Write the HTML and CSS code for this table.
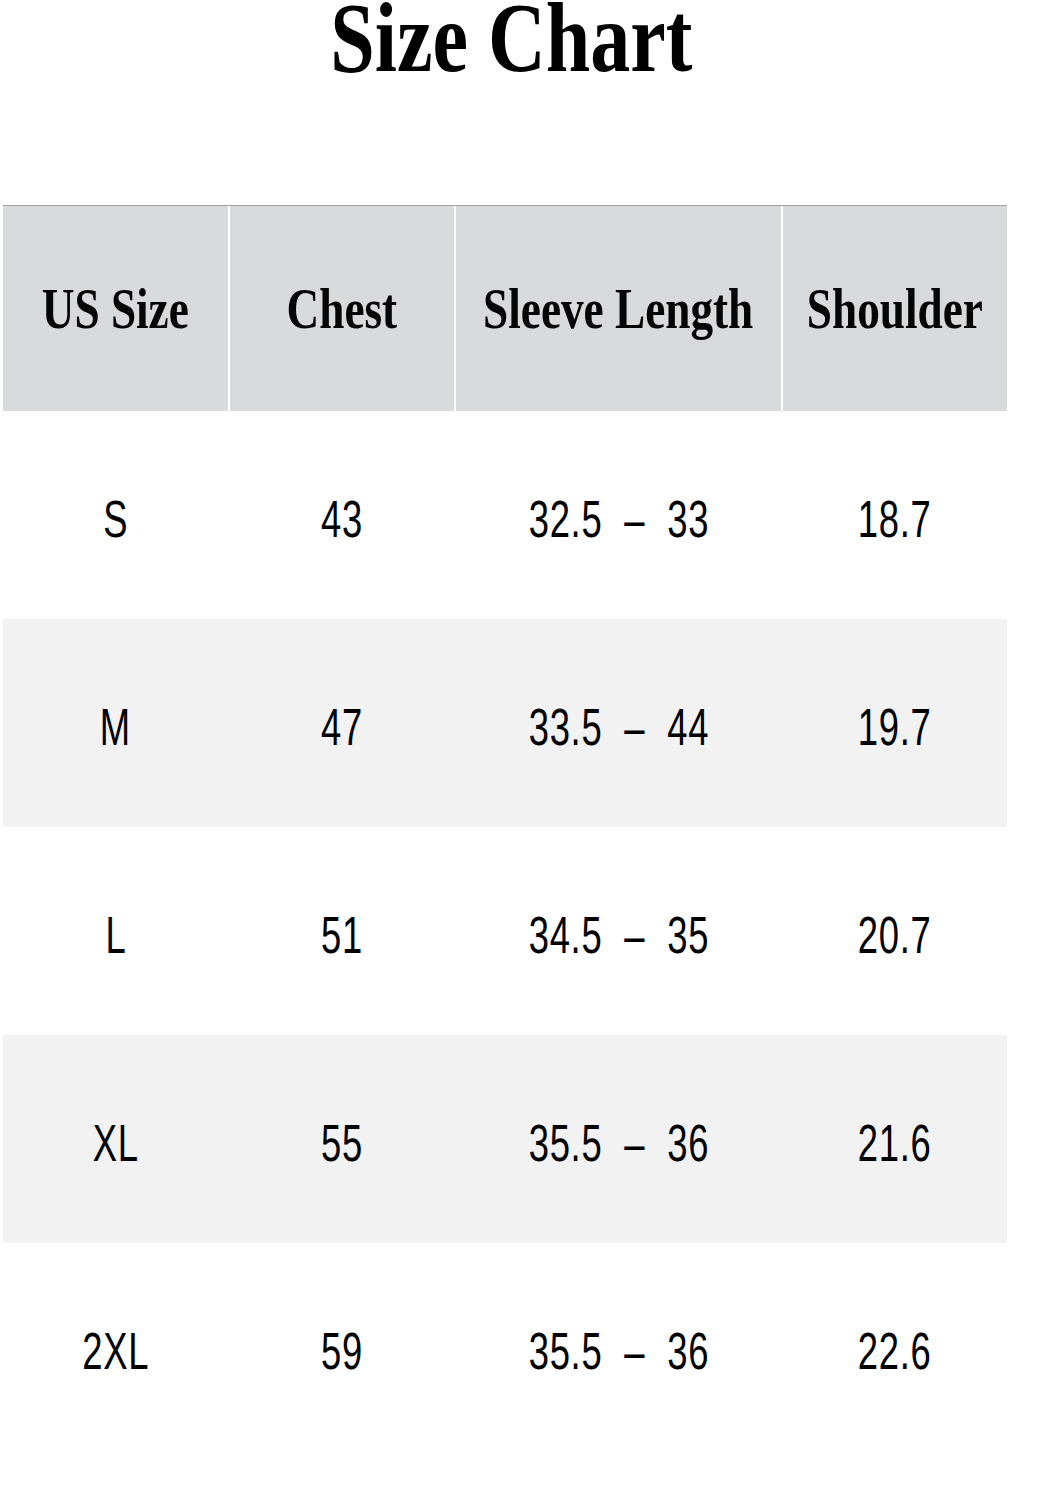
FILE: index.html
```html
<!DOCTYPE html>
<html lang="en">
<head>
<meta charset="utf-8">
<title>Size Chart</title>
<link rel="stylesheet" href="styles.css">
</head>
<body>
<div class="page">
  <h1 class="title"><span class="squeeze">Size Chart</span></h1>
  <div class="chart">
    <div class="row head">
      <div class="cell"><span class="hsq">US Size</span></div>
      <div class="cell"><span class="hsq">Chest</span></div>
      <div class="cell"><span class="hsq">Sleeve Length</span></div>
      <div class="cell"><span class="hsq">Shoulder</span></div>
    </div>
    <div class="row">
      <div class="cell"><span class="dsq">S</span></div>
      <div class="cell"><span class="dsq">43</span></div>
      <div class="cell"><span class="dsq">32.5 – 33</span></div>
      <div class="cell"><span class="dsq">18.7</span></div>
    </div>
    <div class="row alt">
      <div class="cell"><span class="dsq">M</span></div>
      <div class="cell"><span class="dsq">47</span></div>
      <div class="cell"><span class="dsq">33.5 – 44</span></div>
      <div class="cell"><span class="dsq">19.7</span></div>
    </div>
    <div class="row">
      <div class="cell"><span class="dsq">L</span></div>
      <div class="cell"><span class="dsq">51</span></div>
      <div class="cell"><span class="dsq">34.5 – 35</span></div>
      <div class="cell"><span class="dsq">20.7</span></div>
    </div>
    <div class="row alt">
      <div class="cell"><span class="dsq">XL</span></div>
      <div class="cell"><span class="dsq">55</span></div>
      <div class="cell"><span class="dsq">35.5 – 36</span></div>
      <div class="cell"><span class="dsq">21.6</span></div>
    </div>
    <div class="row">
      <div class="cell"><span class="dsq">2XL</span></div>
      <div class="cell"><span class="dsq">59</span></div>
      <div class="cell"><span class="dsq">35.5 – 36</span></div>
      <div class="cell"><span class="dsq">22.6</span></div>
    </div>
  </div>
</div>
</body>
</html>
```
FILE: styles.css
```css
html, body {
  margin: 0;
  padding: 0;
  background: #ffffff;
}

.page {
  width: 1047px;
  height: 1500px;
  overflow: hidden;
  background: #ffffff;
  color: #000000;
}

.title {
  margin: 0;
  padding-right: 24px;
  height: 76px;
  line-height: 76px;
  text-align: center;
  font-family: "Liberation Serif", "Times New Roman", serif;
  font-weight: bold;
  font-size: 100px;
}

.squeeze {
  display: inline-block;
  transform: scaleX(0.8);
  transform-origin: center;
}

.chart {
  margin: 129px 0 0 3px;
  width: 1004px;
}

.row {
  display: grid;
  grid-template-columns: 225px 224px 325px 224px;
  column-gap: 2px;
  height: 208px;
}

.row.alt {
  background: #f2f2f2;
}

.row.head {
  height: 206px;
  border-top: 1px solid #a3a3a3;
  box-sizing: border-box;
}

.cell {
  display: flex;
  align-items: center;
  justify-content: center;
}

.head .cell {
  background: #d9dadb;
}

.row:not(.head) .cell {
  padding-top: 7px;
  box-sizing: border-box;
}

.hsq {
  display: inline-block;
  white-space: nowrap;
  font-family: "Liberation Serif", "Times New Roman", serif;
  font-weight: bold;
  font-size: 58px;
  transform: scaleX(0.78);
  transform-origin: center;
  color: #050505;
}

.dsq {
  display: inline-block;
  white-space: nowrap;
  font-family: "Liberation Sans", Arial, sans-serif;
  font-size: 52px;
  letter-spacing: 1px;
  word-spacing: 16px;
  transform: scaleX(0.7);
  transform-origin: center;
  color: #000000;
}
```
